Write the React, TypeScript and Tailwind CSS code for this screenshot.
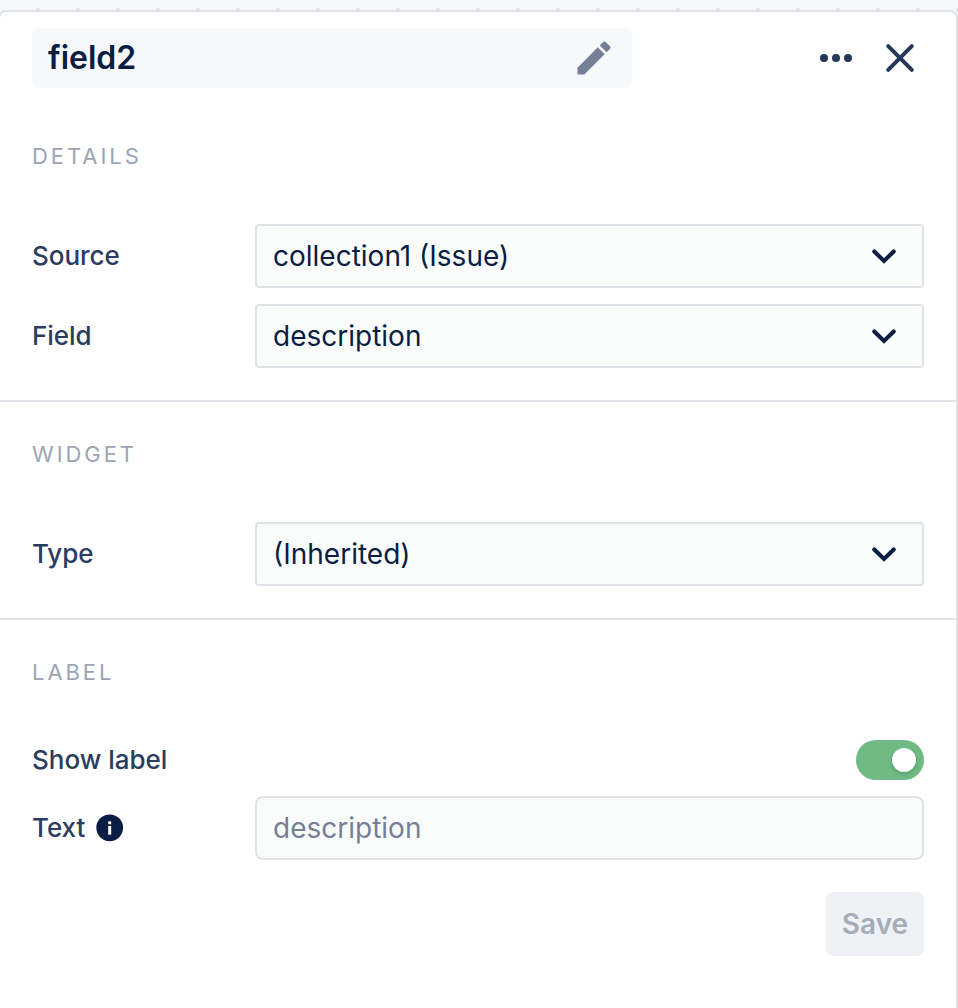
import type { ReactNode } from "react";

function Chevron() {
  return (
    <svg className="h-6 w-6 shrink-0" viewBox="0 0 24 24" fill="none" stroke="#091e42" strokeWidth="4.1" strokeLinecap="round">
      <path d="M2.3 7.5 12 17l9.7-9.5" />
    </svg>
  );
}

function PencilIcon() {
  return (
    <svg className="h-11 w-11" viewBox="0 0 24 24" fill="#758097">
      <path d="M3 17.25V21h3.75L17.81 9.94l-3.75-3.75L3 17.25zM20.71 7.04a.996.996 0 0 0 0-1.41l-2.34-2.34a.996.996 0 0 0-1.41 0l-1.83 1.83 3.75 3.75 1.83-1.83z" />
    </svg>
  );
}

function SectionTitle({ children }: { children: ReactNode }) {
  return <h2 className="mb-[54px] text-[22px] leading-7 font-normal tracking-[2.95px] text-[#9ca5b4]">{children}</h2>;
}

function Section({ title, children }: { title: string; children: ReactNode }) {
  return (
    <section className="border-b-2 border-[#dfe3e8] px-8 pt-[38px] pb-8">
      <SectionTitle>{title}</SectionTitle>
      {children}
    </section>
  );
}

function Row({ label, children }: { label: ReactNode; children: ReactNode }) {
  return (
    <div className="flex h-16 items-center justify-between">
      <div className="flex items-center text-[26px] leading-8 font-medium tracking-[-0.05px] text-[#2a3c60]">{label}</div>
      {children}
    </div>
  );
}

function Select({ value }: { value: string }) {
  return (
    <button className="flex h-16 w-[669px] items-center justify-between rounded border-2 border-[#dfe3e8] bg-[#fafcfb] pr-[26px] pl-4 text-[28px] leading-8 text-[#091e42]">
      <span>{value}</span>
      <Chevron />
    </button>
  );
}

export default function App() {
  return (
    <div className="h-[1008px] w-[958px] overflow-hidden bg-[#f7f8fa] bg-[radial-gradient(circle_at_18px_10px,#dcdfe5_1.6px,transparent_2.4px)] bg-[length:40px_40px] bg-[position:20px_0px] pt-[10px] font-['Inter',sans-serif]">
      <div className="-ml-0.5 h-[1010px] w-[960px] rounded-t-lg border-2 border-[#dfe3e8] bg-white">
        <header className="flex items-center justify-between pt-4 pr-10 pl-8">
          <div className="flex h-[60px] w-[600px] items-center justify-between rounded-lg bg-[#f7f8fa] pr-4 pl-4">
            <h1 className="text-[32px] leading-10 font-semibold text-[#091e42]">field2</h1>
            <PencilIcon />
          </div>
          <div className="flex items-center gap-[32px]">
            <svg className="h-8 w-8" viewBox="0 0 32 32" fill="#253858">
              <circle cx="4" cy="16" r="4" />
              <circle cx="16" cy="16" r="4" />
              <circle cx="28" cy="16" r="4" />
            </svg>
            <svg className="h-8 w-8" viewBox="0 0 32 32" fill="none" stroke="#253858" strokeWidth="4" strokeLinecap="round">
              <path d="M4.2 4.2l23.6 23.6M27.8 4.2 4.2 27.8" />
            </svg>
          </div>
        </header>

        <div className="pt-4">
          <Section title="DETAILS">
            <div className="flex flex-col gap-4">
              <Row label="Source">
                <Select value="collection1 (Issue)" />
              </Row>
              <Row label="Field">
                <Select value="description" />
              </Row>
            </div>
          </Section>
          <Section title="WIDGET">
            <Row label="Type">
              <Select value="(Inherited)" />
            </Row>
          </Section>
          <section className="px-8 pt-[38px]">
            <SectionTitle>LABEL</SectionTitle>
            <div className="mb-4 flex h-10 items-center justify-between">
              <span className="text-[26px] leading-8 font-medium text-[#2a3c60]">Show label</span>
              <button className="flex h-10 w-[68px] items-center justify-end rounded-full bg-[#70bb85] pr-2" aria-label="Show label">
                <span className="h-6 w-6 rounded-full bg-white shadow-[0_2px_4px_rgba(0,35,11,0.2)]" />
              </button>
            </div>
            <Row
              label={
                <>
                  <span>Text</span>
                  <svg className="ml-[11px] h-7 w-7" viewBox="0 0 28 28">
                    <circle cx="13.7" cy="13.8" r="13.4" fill="#091e42" />
                    <rect x="12.2" y="7.3" width="3" height="3" rx="0.5" fill="white" />
                    <path d="M12.2 11.9h3v8.8h-3z" fill="white" />
                  </svg>
                </>
              }
            >
              <input
                className="h-16 w-[669px] rounded-lg border-2 border-[#dfe3e8] bg-[#fafcfb] px-4 text-[28px] leading-8 placeholder:text-[#758097]"
                placeholder="description"
              />
            </Row>
            <div className="mt-8 flex justify-end">
              <button className="h-16 w-[98px] rounded-lg bg-[#f0f1f4] text-[28px] leading-8 font-semibold text-[#a5adba]">Save</button>
            </div>
          </section>
        </div>
      </div>
    </div>
  );
}
